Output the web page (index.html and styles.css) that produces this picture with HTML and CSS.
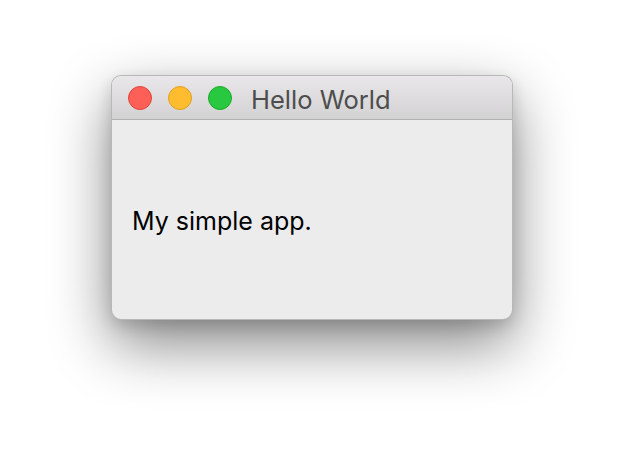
FILE: index.html
```html
<!DOCTYPE html>
<html>
<head>
<meta charset="utf-8">
<link rel="stylesheet" href="styles.css">
</head>
<body>
<div class="desk">
  <div class="window">
    <div class="titlebar">
      <span class="light red"></span>
      <span class="light yellow"></span>
      <span class="light green"></span>
      <span class="title">Hello World</span>
    </div>
    <div class="content">
      <p class="msg">My simple app.</p>
    </div>
  </div>
</div>
</body>
</html>
```
FILE: styles.css
```css
html, body {
  margin: 0;
  padding: 0;
  background: #ffffff;
}
.desk {
  width: 624px;
  height: 468px;
  padding: 75px 0 0 111px;
  box-sizing: border-box;
  overflow: hidden;
}
.window {
  width: 402px;
  height: 245px;
  box-sizing: border-box;
  border: 1px solid rgba(0,0,0,0.22);
  border-radius: 10px;
  overflow: hidden;
  background: #ececec;
  box-shadow: 0 24px 60px rgba(0,0,0,0.48), 0 6px 16px rgba(0,0,0,0.14);
  display: flex;
  flex-direction: column;
  font-family: Inter, "Liberation Sans", sans-serif;
}
.titlebar {
  height: 43px;
  flex: none;
  display: flex;
  align-items: center;
  padding-left: 16px;
  background: linear-gradient(#e9e7e9, #d3d2d3);
  border-bottom: 1px solid #b1b1b1;
}
.light {
  width: 24px;
  height: 24px;
  border-radius: 50%;
  box-sizing: border-box;
  margin-right: 16px;
}
.red { background: #fe5f57; border: 1px solid #e0443e; }
.yellow { background: #febc2e; border: 1px solid #dea123; }
.green { background: #28c840; border: 1px solid #1aab29; }
.title {
  margin-left: 3px;
  margin-top: 3px;
  font-size: 25.5px;
  color: #4d4d4d;
}
.content {
  flex: 1;
  display: flex;
  align-items: center;
  padding-left: 20px;
}
.msg {
  margin: 2px 0 0 0;
  font-size: 25px;
  color: #000;
}
```
